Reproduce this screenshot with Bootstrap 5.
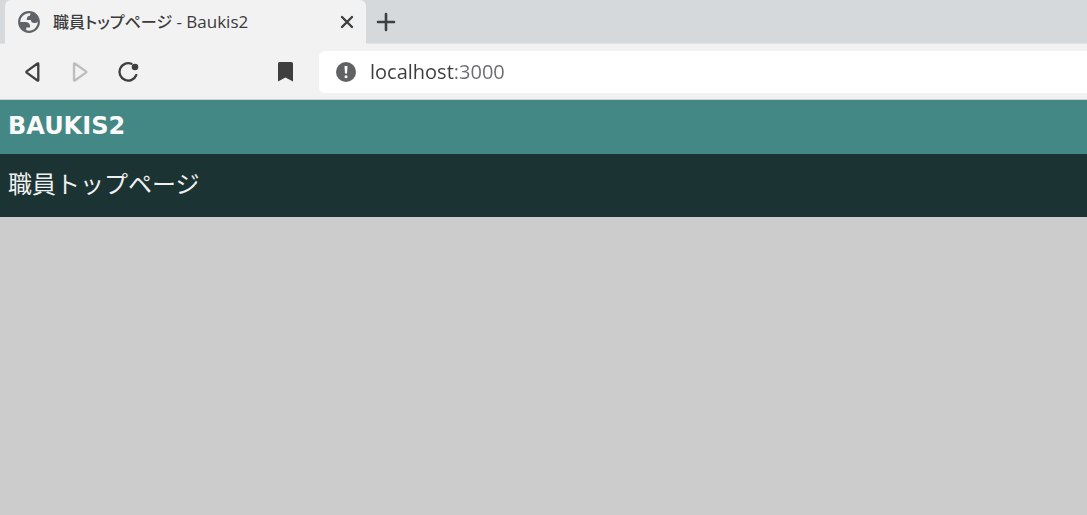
<!DOCTYPE html>
<html lang="ja">
<head>
<meta charset="utf-8">
<meta name="viewport" content="width=device-width, initial-scale=1">
<title>職員トップページ - Baukis2</title>
<link href="https://cdn.jsdelivr.net/npm/bootstrap@5.3.0/dist/css/bootstrap.min.css" rel="stylesheet">
<style>
body { background: #ccc; font-family: "Open Sans", "Noto Sans CJK JP", sans-serif; }
svg { display: block; flex: none; }
.icon-btn { padding: 0; border: 0; color: #3f3f3f; line-height: 1; }
.icon-btn:disabled { border: 0; opacity: 1; color: #bdbdbd; }
.tab-strip { height: 44px; background: #d5d9dc; border-bottom: 1px solid #e2e3e4; }
.browser-tab { width: 361px; margin: 0 0 -1px 5px; padding: 0 8px 0 12px; background: #f2f2f2; border-radius: 6px 6px 0 0; color: #3b3b3b; }
.tab-title { font-size: 17px; font-weight: 500; line-height: 24px; font-feature-settings: "palt"; }
.tab-title [lang] { font-size: 16px; }
.toolbar-row { height: 56px; padding-left: 20px; background: #f2f2f2; border-bottom: 1px solid #cfcfcf; }
.nav-set { width: 299px; padding-right: 22px; }
.address-box { height: 42px; padding-left: 16px; gap: 13px; background: #fff; border-radius: 6px 0 0 6px; }
.address-input { padding: 0; border: 0; font-size: 20px; line-height: 28px; background: linear-gradient(to right, #3c3c3c 84px, #6b6c6e 84px); background-clip: text; -webkit-background-clip: text; color: transparent; outline: 0; min-width: 0; }
.site-head { height: 54px; padding: 8px; background: #448886; color: #fafafa; font-family: "DejaVu Sans", sans-serif; font-size: 24px; line-height: 36px; }
.page-title { padding: 11px 8px 16px; background: #1b3333; color: #f0f0f0; font-family: "Noto Sans CJK JP", sans-serif; font-size: 24px; line-height: 36px; font-weight: 400; }
</style>
</head>
<body>
<div class="tab-strip d-flex">
  <div class="browser-tab d-flex align-items-center">
    <svg width="24" height="24" viewBox="1 1 22 22" aria-hidden="true">
      <path fill="#5f6367" fill-rule="evenodd" d="M12 2c5.523 0 10 4.477 10 10s-4.477 10-10 10S2 17.523 2 12 6.477 2 12 2zM4 12h4.400c3.407.022 4.922 1.730 4.543 5.127H9.488v2.470a8.004 8.004 0 0 0 10.498-8.083C19.327 12.504 18.332 13 17 13c-2.137 0-3.206-.916-3.206-2.750h-3.748c-.274-2.728.683-4.092 2.870-4.092 0-.975.327-1.597.811-1.970A8.004 8.004 0 0 0 4 12z"/>
    </svg>
    <span class="tab-title ms-2 ps-1 flex-grow-1"><span lang="ja">職員トップページ</span> - Baukis2</span>
    <button type="button" class="btn icon-btn" aria-label="タブを閉じる">
      <svg width="22" height="22" viewBox="0 0 22 22"><path d="M6 6 16 16M16 6 6 16" stroke="currentColor" stroke-width="2.400" stroke-linecap="round"/></svg>
    </button>
  </div>
  <button type="button" class="btn icon-btn ms-2" aria-label="新しいタブ">
    <svg width="24" height="24" viewBox="0 0 24 24"><path d="M12 4V20M4 12H20" stroke="currentColor" stroke-width="2.600" stroke-linecap="round"/></svg>
  </button>
</div>
<div class="toolbar-row d-flex align-items-center">
  <div class="nav-set d-flex align-items-center flex-shrink-0">
    <button type="button" class="btn icon-btn" aria-label="戻る">
      <svg width="24" height="24" viewBox="0 0 24 24"><path d="M18.300 3.700V20.300Q18.300 21 17.500 20.500L6.700 12.600Q6 12 6.700 11.400L17.500 3.500Q18.300 3 18.300 3.700Z" fill="none" stroke="currentColor" stroke-width="2.300" stroke-linejoin="round"/></svg>
    </button>
    <button type="button" class="btn icon-btn ms-4" aria-label="進む" disabled>
      <svg width="24" height="24" viewBox="0 0 24 24"><path d="M6 3.700V20.300Q6 21 6.800 20.500L18 12.600Q18.700 12 18 11.400L6.800 3.500Q6 3 6 3.700Z" fill="none" stroke="currentColor" stroke-width="2.300" stroke-linejoin="round"/></svg>
    </button>
    <button type="button" class="btn icon-btn ms-4" aria-label="再読み込み">
      <svg width="24" height="24" viewBox="0 0 24 24"><path d="M15.500 3.800A8.700 8.700 0 1 0 20.300 15" fill="none" stroke="currentColor" stroke-width="2.300" stroke-linecap="round"/><circle cx="19" cy="7" r="3.300" fill="currentColor"/></svg>
    </button>
    <button type="button" class="btn icon-btn ms-auto" aria-label="ブックマーク">
      <svg width="24" height="24" viewBox="0 0 24 24"><path d="M6.500 2H18.300Q20 2 20 3.700V21.500L12.400 17.400 5 21.500V3.700Q5 2 6.500 2Z" fill="currentColor"/></svg>
    </button>
  </div>
  <div class="address-box d-flex align-items-center flex-grow-1">
    <svg width="22" height="22" viewBox="0 0 22 22" aria-hidden="true"><circle cx="11" cy="11" r="10" fill="#5f6163"/><path d="M9.500 5H12.500L12 12.600H10Z" fill="#fff"/><circle cx="11" cy="15.700" r="1.500" fill="#fff"/></svg>
    <input type="text" class="address-input flex-grow-1" id="address" value="localhost:3000" spellcheck="false" aria-label="アドレス">
  </div>
</div>
<header class="site-head fw-bold">BAUKIS2</header>
<main>
  <h1 class="page-title m-0">職員トップページ</h1>
</main>
<script src="https://cdn.jsdelivr.net/npm/bootstrap@5.3.0/dist/js/bootstrap.bundle.min.js"></script>
</body>
</html>
